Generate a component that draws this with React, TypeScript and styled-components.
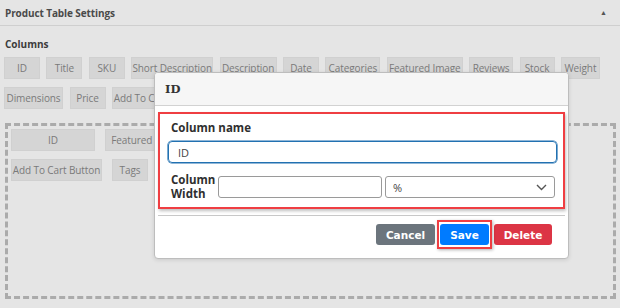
import React from "react";
import styled, { createGlobalStyle } from "styled-components";

const Global = createGlobalStyle`
  html, body { margin: 0; padding: 0; background: #e5e5e5; overflow: hidden; }
  body { font-family: "Open Sans", "Liberation Sans", sans-serif; }
  * { box-sizing: border-box; }
`;

const Page = styled.div`
  position: relative;
  width: 620px;
  height: 308px;
  background: #e5e5e5;
`;

const Header = styled.div`
  height: 26px;
  border-bottom: 1px solid #cfcfcf;
  display: flex;
  align-items: center;
  justify-content: space-between;
  padding: 0 13px 0 5px;
`;

const Title = styled.div`
  font-size: 10px;
  font-weight: 700;
  letter-spacing: -0.1px;
  color: #4a4a4a;
`;

const Toggle = styled.span`
  font-size: 7px;
  color: #555;
  margin-top: -1px;
`;

const Content = styled.div`
  padding: 11px 4px 0 5px;
  display: flex;
  flex-direction: column;
`;

const Label = styled.div`
  font-size: 10px;
  font-weight: 700;
  color: #3c3c3c;
  line-height: 14px;
  margin-bottom: 6px;
`;

const ChipRow = styled.div<{ $gap: number; $indent?: number }>`
  display: flex;
  gap: ${(p) => p.$gap}px;
  margin-bottom: 8px;
  margin-left: ${(p) => p.$indent ?? 0}px;
  white-space: nowrap;
`;

const Chip = styled.div<{ $w?: number }>`
  height: 22px;
  width: ${(p) => (p.$w ? `${p.$w}px` : "auto")};
  padding: 0 4px;
  background: #d5d5d5;
  border: 1px solid #d0d0d0;
  color: #7a7a7a;
  font-size: 10px;
  letter-spacing: -0.1px;
  display: flex;
  align-items: center;
  justify-content: center;
  flex-shrink: 0;
  overflow: hidden;
`;

const DropZone = styled.div`
  margin-top: 6px;
  height: 176px;
  border: 3px dashed #ababab;
  padding: 3px 3px;
  display: flex;
  flex-direction: column;
`;

const Modal = styled.div`
  position: absolute;
  left: 154px;
  top: 72px;
  width: 415px;
  height: 187px;
  background: #fff;
  border: 1px solid #bdbdbd;
  border-radius: 4px;
  box-shadow: 0 1px 4px rgba(0, 0, 0, 0.12);
  display: flex;
  flex-direction: column;
  overflow: hidden;
`;

const ModalHead = styled.div`
  height: 33px;
  background: #f6f6f6;
  border-bottom: 1px solid #d2d2d2;
  display: flex;
  align-items: center;
  padding-left: 10px;
  font-family: "DejaVu Serif", "Liberation Serif", serif;
  font-weight: 700;
  font-size: 11.5px;
  color: #333;
`;

const ModalBody = styled.div`
  padding: 6px 3px 0 3px;
  display: flex;
  flex-direction: column;
`;

const Highlight = styled.div`
  border: 2px solid #ef3e42;
  box-shadow: 1px 2px 3px rgba(0, 0, 0, 0.25);
  padding: 7px 6px 6px 8px;
  display: flex;
  flex-direction: column;
`;

const FieldLabel = styled.div`
  font-size: 11.5px;
  font-weight: 700;
  color: #2f2f2f;
  line-height: 14px;
  padding-left: 3px;
  margin-bottom: 6px;
`;

const NameInput = styled.div`
  height: 22px;
  border: 1px solid #2271b1;
  box-shadow: 0 0 0 0.6px #2271b1;
  border-radius: 4px;
  display: flex;
  align-items: center;
  padding-left: 9px;
  font-size: 11px;
  color: #444;
  margin-bottom: 10px;
`;

const WidthRow = styled.div`
  display: flex;
  align-items: center;
  gap: 3px;
`;

const WidthLabel = styled.div`
  width: 47px;
  font-size: 11.5px;
  font-weight: 700;
  line-height: 14px;
  color: #2f2f2f;
  padding-left: 3px;
`;

const TextBox = styled.div<{ $w: number }>`
  width: ${(p) => p.$w}px;
  height: 22px;
  border: 1px solid #9a9a9a;
  border-radius: 3px;
  background: #fff;
  display: flex;
  align-items: center;
  justify-content: space-between;
  padding: 0 7px 0 7px;
  font-size: 11px;
  color: #444;
`;

const Divider = styled.div`
  height: 1px;
  background: #c8c8c8;
  margin-top: 6px;
`;

const Actions = styled.div`
  display: flex;
  justify-content: flex-end;
  align-items: center;
  gap: 5px;
  padding: 8px 13px 0 0;
`;

const Btn = styled.div<{ $bg: string; $w: number }>`
  width: ${(p) => p.$w}px;
  height: 21px;
  border-radius: 3px;
  background: ${(p) => p.$bg};
  color: #fff;
  font-family: "DejaVu Sans", Verdana, sans-serif;
  font-weight: 700;
  font-size: 10.5px;
  display: flex;
  align-items: center;
  justify-content: center;
`;

const SaveFrame = styled.div`
  position: relative;
  display: flex;
  &::after {
    content: "";
    position: absolute;
    left: -3px;
    top: -4px;
    right: -3px;
    bottom: -4px;
    border: 2px solid #ef3e42;
    box-shadow: 1px 1px 3px rgba(0, 0, 0, 0.3);
    pointer-events: none;
  }
`;

const row1: [string, number][] = [
  ["ID", 36],
  ["Title", 36],
  ["SKU", 36],
  ["Short Description", 82],
  ["Description", 57],
  ["Date", 36],
  ["Categories", 55],
  ["Featured Image", 76],
  ["Reviews", 44],
  ["Stock", 35],
  ["Weight", 39],
];
const row2: [string, number][] = [
  ["Dimensions", 59],
  ["Price", 36],
  ["Add To Cart Button", 91],
  ["Tags", 36],
];

export default function App() {
  return (
    <>
      <Global />
      <Page>
        <Header>
          <Title>Product Table Settings</Title>
          <Toggle>▲</Toggle>
        </Header>
        <Content>
          <Label>Columns</Label>
          <ChipRow $gap={6.4} $indent={-1}>
            {row1.map(([c, w]) => (
              <Chip key={c} $w={w}>{c}</Chip>
            ))}
          </ChipRow>
          <ChipRow $gap={6.5} $indent={-1}>
            {row2.map(([c, w]) => (
              <Chip key={c} $w={w}>{c}</Chip>
            ))}
          </ChipRow>
          <DropZone>
            <ChipRow $gap={10}>
              <Chip $w={84}>ID</Chip>
              <Chip $w={84}>Featured Image</Chip>
              <Chip $w={84}>Title</Chip>
            </ChipRow>
            <ChipRow $gap={10}>
              <Chip $w={91}>Add To Cart Button</Chip>
              <Chip $w={36}>Tags</Chip>
            </ChipRow>
          </DropZone>
        </Content>
        <Modal>
          <ModalHead>ID</ModalHead>
          <ModalBody>
            <Highlight>
              <FieldLabel>Column name</FieldLabel>
              <NameInput>ID</NameInput>
              <WidthRow>
                <WidthLabel>Column Width</WidthLabel>
                <TextBox $w={164} />
                <TextBox $w={170}>
                  <span>%</span>
                  <svg width="11" height="7" viewBox="0 0 11 7">
                    <path d="M1 1 L5.5 5.5 L10 1" fill="none" stroke="#555" strokeWidth="1.4" />
                  </svg>
                </TextBox>
              </WidthRow>
            </Highlight>
            <Divider />
            <Actions>
              <Btn $bg="#6c757d" $w={59}>Cancel</Btn>
              <SaveFrame>
                <Btn $bg="#007bff" $w={49}>Save</Btn>
              </SaveFrame>
              <Btn $bg="#dc3545" $w={58}>Delete</Btn>
            </Actions>
          </ModalBody>
        </Modal>
      </Page>
    </>
  );
}
